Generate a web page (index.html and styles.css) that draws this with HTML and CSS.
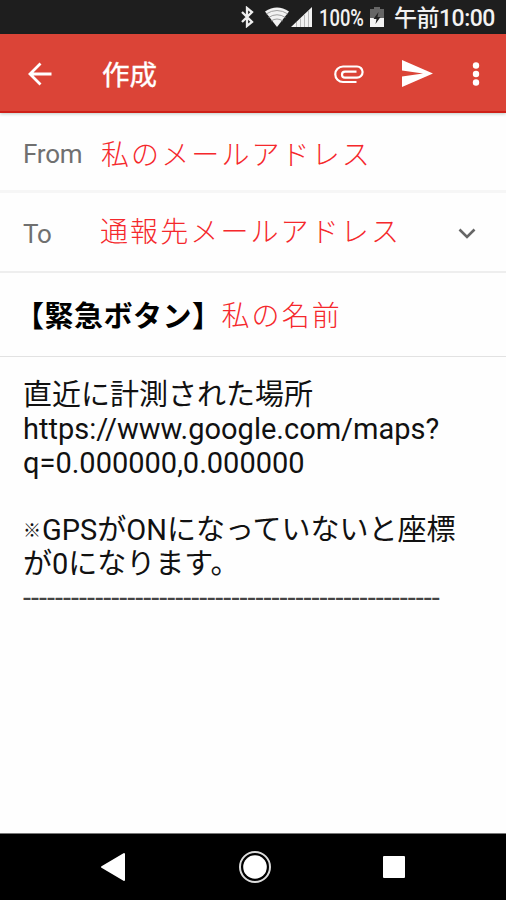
FILE: index.html
```
<!DOCTYPE html>
<html lang="ja">
<head>
<meta charset="UTF-8">
<meta name="viewport" content="width=device-width, initial-scale=1.0">
<title>作成</title>
<link rel="stylesheet" href="styles.css">
</head>
<body>

<!-- Status Bar -->
<div class="status-bar">
    <svg class="bluetooth" width="16" height="22" viewBox="0 0 16 22">
        <path d="M3 6l10 10-5 4V2l5 4L3 16" fill="none" stroke="#eee" stroke-width="2.300"/>
    </svg>
    <svg class="wifi" width="26" height="22" viewBox="0 0 26 22">
        <path d="M1 5.5Q13-2.5 25 5.5L13 21z" fill="#f2f2f2"/>
        <path d="M2 8Q13 1 24 8M4.500 11.500Q13 6 21.500 11.500M7 15Q13 11 19 15" fill="none" stroke="#888" stroke-width=".8"/>
    </svg>
    <svg class="signal" width="22" height="22" viewBox="0 0 22 22">
        <path d="M0 21L21 1v20z" fill="#f2f2f2"/>
        <path d="M5.500 16v5M9.500 12.500v8.500M13.500 9v12M17.500 5v16" stroke="#aaa" stroke-width=".8"/>
    </svg>
    <span class="percent">100%</span>
    <svg class="battery" width="14" height="22" viewBox="0 0 14 22">
        <path d="M4 1h6v2h4v9H0V3h4z" fill="#666"/>
        <path d="M0 12h14v9H0z" fill="#f2f2f2"/>
        <path d="M8.500 6L3.500 13h3l-1 5 5-7h-3z" fill="#222"/>
    </svg>
    <span class="clock">午前10:00</span>
</div>

<!-- Top Bar -->
<div class="top-bar">
    <svg class="back" width="24" height="24" viewBox="0 0 24 24">
        <path d="M23.500 12H2M12.500 1.500L2 12l10.500 10.500" fill="none" stroke="#fff" stroke-width="2.800"/>
    </svg>
    <h1>作成</h1>
    <svg class="attach" width="30" height="20" viewBox="0 0 30 20">
        <path d="M22.500 18H9A7.750 7.750 0 0 1 9 2.500H23A5.600 5.600 0 0 1 23 13.700H11A3 3 0 0 1 11 7.700H22.500" fill="none" stroke="#fff" stroke-width="2.200"/>
    </svg>
    <svg class="send" width="31" height="27" viewBox="0 0 31 27">
        <path d="M0 0L31 13.500 0 27V16.500L21 13.500 0 10.500z" fill="#fff"/>
    </svg>
    <svg class="more" width="8" height="24" viewBox="0 0 8 24">
        <circle cx="4" cy="3.500" r="3.200" fill="#fff"/>
        <circle cx="4" cy="12" r="3.200" fill="#fff"/>
        <circle cx="4" cy="20.500" r="3.200" fill="#fff"/>
    </svg>
</div>

<!-- Mail Form -->
<div class="row from">
    <span class="label">From</span>
    <span class="value">私のメールアドレス</span>
</div>
<div class="row to">
    <span class="label">To</span>
    <span class="value">通報先メールアドレス</span>
    <svg class="arrow" width="18" height="12" viewBox="0 0 18 12">
        <path d="M1.500 1.500L9 9l7.500-7.500" fill="none" stroke="#666" stroke-width="2.600"/>
    </svg>
</div>
<div class="row subject">
    <b>【緊急ボタン】</b>
    <span class="value">私の名前</span>
</div>
<div class="message">
    <p>直近に計測された場所</p>
    <p>https://www.google.com/maps?<br>q=0.000000,0.000000</p>
    <br>
    <p><span class="mark">※</span>GPSがONになっていないと座標<br>が0になります。</p>
    <p class="line">----------------------------------------------------</p>
</div>

<!-- Navigation Bar -->
<div class="nav-bar">
    <svg width="26" height="30" viewBox="0 0 26 30">
        <path d="M24 2v26L2 15z" fill="#fff" stroke="#fff" stroke-width="2" stroke-linejoin="round"/>
    </svg>
    <svg width="34" height="34" viewBox="0 0 34 34">
        <circle cx="17" cy="17" r="15" fill="none" stroke="#ddd" stroke-width="2"/>
        <circle cx="17" cy="17" r="11.800" fill="#fff"/>
    </svg>
    <svg width="22" height="22" viewBox="0 0 22 22">
        <rect width="22" height="22" rx="1" fill="#fff"/>
    </svg>
</div>

</body>
</html>
```
FILE: styles.css
```
* {
    box-sizing: border-box;
    margin: 0;
    padding: 0;
}

body {
    font-family: Roboto, "Noto Sans CJK JP", sans-serif;
    background-color: #fefefe;
    color: #111;
    display: flex;
    flex-direction: column;
    height: 900px;
    overflow: hidden;
}

svg {
    display: block;
    flex-shrink: 0;
}

.status-bar {
    height: 34px;
    background-color: #1e1e1e;
    color: #f2f2f2;
    display: flex;
    align-items: center;
    justify-content: flex-end;
    padding-right: 11px;
    white-space: nowrap;
    font-weight: 500;
}

.bluetooth {
    margin-right: 9px;
}

.wifi {
    margin-right: 1px;
}

.signal {
    margin-right: 6px;
}

.percent {
    width: 46px;
    font-size: 23px;
    transform: scaleX(0.8);
    transform-origin: left;
    padding-top: 2px;
    margin-right: 5px;
}

.battery {
    margin-right: 10px;
}

.clock {
    width: 101px;
    font-size: 23px;
    letter-spacing: -0.5px;
    padding-bottom: 2px;
}

.top-bar {
    height: 79px;
    background-color: #db4437;
    border-bottom: 2px solid #cf2018;
    box-shadow: 0 1px 3px rgba(0, 60, 40, 0.25);
    color: #fff;
    display: flex;
    align-items: center;
    padding: 2px 26px 0 28px;
}

.top-bar h1 {
    font-size: 27.5px;
    font-weight: 400;
    -webkit-text-stroke: 0.4px #fff;
    margin-left: 50px;
    margin-right: auto;
    padding-bottom: 2px;
}

.send {
    margin-left: 38px;
}

.more {
    margin-left: 39px;
}

.row {
    display: flex;
    align-items: center;
    padding-left: 23px;
    white-space: nowrap;
}

.from {
    height: 80px;
    border-bottom: 3px solid #f6f6f6;
    padding-top: 3px;
}

.from .label {
    padding-top: 2px;
}

.to {
    height: 80px;
    border-bottom: 2px solid #eee;
}

.to .label {
    padding-top: 3px;
}

.to .value {
    padding-bottom: 5px;
    margin-left: -1px;
}

.subject {
    height: 84px;
    border-bottom: 1px solid #e2e2e2;
    padding-left: 15px;
    padding-bottom: 2px;
}

.label {
    width: 78px;
    color: #707070;
    font-size: 26px;
    letter-spacing: -0.2px;
}

.value {
    color: #f5282c;
    font-family: "Noto Sans CJK JP", sans-serif;
    font-size: 28px;
    font-weight: 300;
    letter-spacing: 2.1px;
}

.arrow {
    margin-left: auto;
    margin-right: 30px;
    margin-top: 3px;
}

.subject b {
    font-size: 29px;
    letter-spacing: 0.5px;
    color: #000;
}

.message {
    flex: 1;
    padding: 22px 23px;
    font-size: 29px;
    line-height: 33.8px;
    white-space: nowrap;
}

.mark {
    display: inline-block;
    width: 19px;
    font-size: 18px;
    font-weight: 500;
    line-height: 1;
    vertical-align: 3px;
}

.line {
    color: #444;
}

.nav-bar {
    height: 67px;
    background-color: #000;
    border-top: 1px solid #777;
    display: flex;
    align-items: center;
    justify-content: space-between;
    padding: 0 101px 0 100px;
}
```
